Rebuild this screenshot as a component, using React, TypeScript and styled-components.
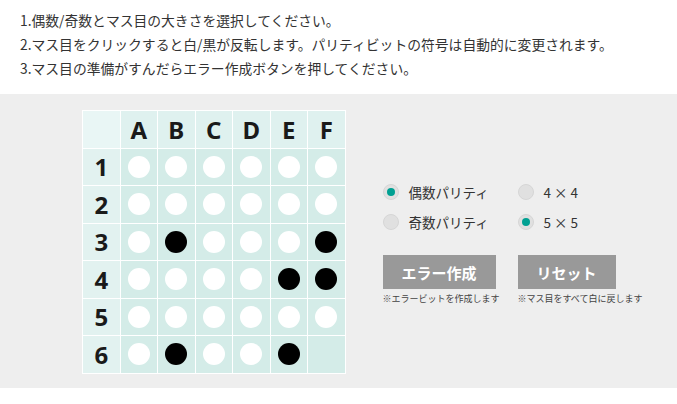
import React, { useState } from "react";
import styled, { createGlobalStyle } from "styled-components";

const GlobalStyle = createGlobalStyle`
  html, body { margin: 0; padding: 0; background: #fff; }
  body { font-family: "Noto Sans CJK JP", "Noto Sans", sans-serif; color: #333; }
`;

const Page = styled.div`
  width: 677px;
`;

const Instructions = styled.ol`
  list-style: none;
  margin: 0;
  padding: 8px 0 0 20px;
  height: 94px;
  box-sizing: border-box;
`;

const Step = styled.li`
  font-size: 13.8px;
  line-height: 24px;
  height: 24px;
  color: #333;
  white-space: nowrap;
`;

const Panel = styled.section`
  background: #eeeeee;
  height: 294px;
  box-sizing: border-box;
  padding: 16px 0 0 82px;
  display: flex;
  align-items: flex-start;
  gap: 37px;
`;

const Board = styled.div`
  display: grid;
  grid-template-columns: repeat(7, 36.5px);
  grid-auto-rows: 36.5px;
  gap: 1px;
  padding: 1px;
  background: #ffffff;
`;

const Cell = styled.div<{ $kind: "corner" | "col" | "row" | "data" }>`
  display: flex;
  align-items: center;
  justify-content: center;
  background: ${(p) =>
    p.$kind === "corner"
      ? "#e9f6f5"
      : p.$kind === "col"
      ? "#dff1ef"
      : p.$kind === "row"
      ? "#e2f2f0"
      : "#d4ece8"};
  font-family: "Noto Sans", "DejaVu Sans", sans-serif;
  font-weight: 700;
  font-size: 24px;
  color: #1a1a1a;
  cursor: ${(p) => (p.$kind === "data" ? "pointer" : "default")};
  user-select: none;
`;

const Disc = styled.span<{ $black: boolean }>`
  width: 22px;
  height: 22px;
  border-radius: 50%;
  background: ${(p) => (p.$black ? "#000" : "#fff")};
`;

const Controls = styled.div`
  display: flex;
  flex-direction: column;
  padding-top: 67px;
`;

const RadioGrid = styled.div`
  display: grid;
  grid-template-columns: 135px 135px;
  grid-auto-rows: 30px;
`;

const RadioLabel = styled.label`
  display: flex;
  align-items: center;
  gap: 10px;
  font-size: 13.5px;
  color: #333;
  cursor: pointer;
  height: 30px;
`;

const RadioMark = styled.span<{ $on: boolean }>`
  width: 16px;
  height: 16px;
  box-sizing: border-box;
  border-radius: 50%;
  background: #e0e0e0;
  border: 1px solid #d6d6d6;
  display: flex;
  align-items: center;
  justify-content: center;
  &::after {
    content: "";
    width: 8px;
    height: 8px;
    border-radius: 50%;
    background: ${(p) => (p.$on ? "#00a092" : "transparent")};
  }
`;

const ButtonRow = styled.div`
  display: flex;
  margin-top: 18px;
`;

const ButtonBox = styled.div<{ $w: number }>`
  width: ${(p) => p.$w}px;
  display: flex;
  flex-direction: column;
`;

const ActionButton = styled.button<{ $w: number }>`
  width: ${(p) => p.$w}px;
  height: 34px;
  border: none;
  background: #999999;
  color: #fff;
  font-family: "Noto Sans CJK JP", sans-serif;
  font-weight: 700;
  font-size: 15px;
  padding: 0;
  cursor: pointer;
`;

const Note = styled.div`
  font-size: 9px;
  color: #444;
  margin-top: 4px;
  white-space: nowrap;
  line-height: 12px;
`;

const cols = ["A", "B", "C", "D", "E", "F"];
const initial: boolean[][] = [
  [false, false, false, false, false, false],
  [false, false, false, false, false, false],
  [false, true, false, false, false, true],
  [false, false, false, false, true, true],
  [false, false, false, false, false, false],
  [false, true, false, false, true, false],
];

export default function App() {
  const [cells, setCells] = useState(initial);
  const [parity, setParity] = useState<"even" | "odd">("even");
  const [size, setSize] = useState<4 | 5>(5);

  const toggle = (r: number, c: number) => {
    if (r === 5 && c === 5) return;
    setCells((prev) => prev.map((row, i) => row.map((v, j) => (i === r && j === c ? !v : v))));
  };

  return (
    <Page>
      <GlobalStyle />
      <Instructions>
        <Step>1.偶数/奇数とマス目の大きさを選択してください。</Step>
        <Step>2.マス目をクリックすると白/黒が反転します。パリティビットの符号は自動的に変更されます。</Step>
        <Step>3.マス目の準備がすんだらエラー作成ボタンを押してください。</Step>
      </Instructions>
      <Panel>
        <Board>
          <Cell $kind="corner" />
          {cols.map((c) => (
            <Cell key={c} $kind="col">{c}</Cell>
          ))}
          {cells.map((row, r) => (
            <React.Fragment key={r}>
              <Cell $kind="row">{r + 1}</Cell>
              {row.map((v, c) => (
                <Cell key={c} $kind="data" onClick={() => toggle(r, c)}>
                  {!(r === 5 && c === 5) && <Disc $black={v} />}
                </Cell>
              ))}
            </React.Fragment>
          ))}
        </Board>
        <Controls>
          <RadioGrid>
            <RadioLabel onClick={() => setParity("even")}>
              <RadioMark $on={parity === "even"} />
              偶数パリティ
            </RadioLabel>
            <RadioLabel onClick={() => setSize(4)}>
              <RadioMark $on={size === 4} />
              4 × 4
            </RadioLabel>
            <RadioLabel onClick={() => setParity("odd")}>
              <RadioMark $on={parity === "odd"} />
              奇数パリティ
            </RadioLabel>
            <RadioLabel onClick={() => setSize(5)}>
              <RadioMark $on={size === 5} />
              5 × 5
            </RadioLabel>
          </RadioGrid>
          <ButtonRow>
            <ButtonBox $w={135}>
              <ActionButton $w={113}>エラー作成</ActionButton>
              <Note>※エラービットを作成します</Note>
            </ButtonBox>
            <ButtonBox $w={135}>
              <ActionButton $w={98} onClick={() => setCells(initial.map((r) => r.map(() => false)))}>
                リセット
              </ActionButton>
              <Note>※マス目をすべて白に戻します</Note>
            </ButtonBox>
          </ButtonRow>
        </Controls>
      </Panel>
    </Page>
  );
}
